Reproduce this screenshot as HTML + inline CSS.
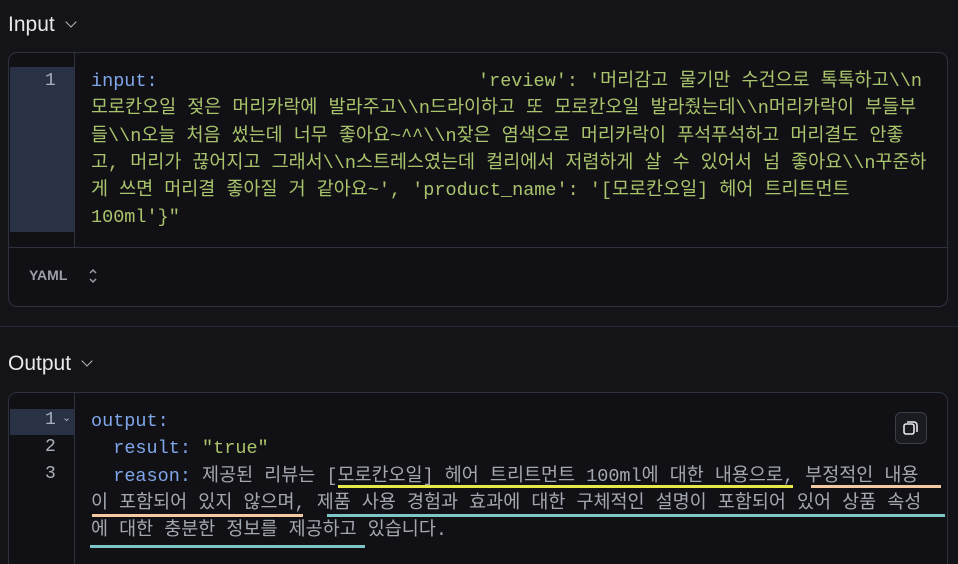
<!DOCTYPE html>
<html><head><meta charset="utf-8"><style>
html,body{margin:0;width:958px;height:564px;overflow:hidden;}
body{background:#141418;position:relative;font-family:"Liberation Sans","Noto Sans CJK KR",sans-serif;}
.h{position:absolute;left:8px;color:#e8e8ec;font-size:21px;}
.chev{display:inline-block;width:7px;height:7px;border-right:1.5px solid #bbb;border-bottom:1.5px solid #bbb;transform:rotate(45deg);margin-left:12px;position:relative;top:-5px;}
.box{position:absolute;left:8px;width:938px;border:1px solid #2c3240;border-radius:9px;background:#111115;overflow:hidden;}
.gut{position:absolute;left:0;top:0;width:65px;border-right:1px solid #2c3240;}
.hl{position:absolute;left:1px;width:64px;background:#293245;}
.code{position:absolute;left:82px;font-family:"Liberation Mono","Noto Sans CJK KR",monospace;font-size:18.5px;line-height:27.3px;white-space:pre;}
.ln{position:absolute;font-family:"Liberation Mono",monospace;font-size:18px;color:#aab0bb;}
.k{color:#7fa6e8}.s{color:#a9c46c}.g{color:#a3a7b0}
.ul{position:absolute;height:3px;}
</style></head><body>
<div class="h" style="top:13px">Input<span class="chev"></span></div>
<div class="box" style="top:52px;height:253px">
 <div class="gut" style="height:194px"></div>
 <div class="hl" style="top:14px;height:165px"></div>
 <div class="ln" style="left:36px;top:18px">1</div>
 <div class="code" style="top:15px"><span class="k">input:</span><span class="s" style="position:absolute;left:387px">'review': '머리감고 물기만 수건으로 톡톡하고\\n</span>
<span class="s">모로칸오일 젖은 머리카락에 발라주고\\n드라이하고 또 모로칸오일 발라줬는데\\n머리카락이 부들부
들\\n오늘 처음 썼는데 너무 좋아요~^^\\n잦은 염색으로 머리카락이 푸석푸석하고 머리결도 안좋
고, 머리가 끊어지고 그래서\\n스트레스였는데 컬리에서 저렴하게 살 수 있어서 넘 좋아요\\n꾸준하
게 쓰면 머리결 좋아질 거 같아요~', 'product_name': '[모로칸오일] 헤어 트리트먼트
100ml'}"</span></div>
 <div style="position:absolute;left:0;right:0;top:194px;border-top:1px solid #2c3240"></div>
 <div style="position:absolute;left:20px;top:214px;color:#9a9ea8;font-size:14px;font-weight:bold">YAML</div>
 <svg style="position:absolute;left:78px;top:212px" width="12" height="22" viewBox="0 0 12 22"><path d="M3 8l3-3 3 3M3 14l3 3 3-3" fill="none" stroke="#9a9ea8" stroke-width="1.5"/></svg>
</div>
<div style="position:absolute;left:0;right:0;top:326px;border-top:1px solid #242a38"></div>
<div class="h" style="top:352px">Output<span class="chev"></span></div>
<div class="box" style="top:392px;height:180px">
 <div class="gut" style="height:190px"></div>
 <div class="hl" style="top:16px;height:26px"></div>
 <div class="ln" style="left:36px;top:17px">1</div>
 <div style="position:absolute;left:53px;top:18px;color:#aab0bb;font-size:11px">⌄</div>
 <div class="ln" style="left:36px;top:44px">2</div>
 <div class="ln" style="left:36px;top:71px">3</div>
 <div class="code" style="top:15px"><span class="k">output:</span>
  <span class="k">result:</span> <span class="s">"true"</span>
  <span class="k">reason:</span> <span class="g">제공된 리뷰는 [모로칸오일] 헤어 트리트먼트 100ml에 대한 내용으로, 부정적인 내용
이 포함되어 있지 않으며, 제품 사용 경험과 효과에 대한 구체적인 설명이 포함되어 있어 상품 속성
에 대한 충분한 정보를 제공하고 있습니다.</span></div>
 <div style="position:absolute;left:886px;top:19px;width:30px;height:30px;border:1px solid #3a3f4a;border-radius:6px;background:#1a1b20">
  <svg width="30" height="30" viewBox="0 0 30 30"><rect x="8" y="11" width="10" height="10" rx="2" fill="none" stroke="#e8e8ec" stroke-width="1.6"/><path d="M11 9h7a3 3 0 0 1 3 3v7" fill="none" stroke="#e8e8ec" stroke-width="1.6"/></svg>
 </div>
</div>
<div class="ul" style="left:338px;width:455px;top:485px;background:#e6e84a"></div>
<div class="ul" style="left:811px;width:130px;top:485px;background:#f3c9a2"></div>
<div class="ul" style="left:92px;width:211px;top:514px;background:#f3c9a2"></div>
<div class="ul" style="left:327px;width:618px;top:514px;background:#7cc6c8"></div>
<div class="ul" style="left:90px;width:275px;top:545px;background:#7cc6c8"></div>
</body></html>
